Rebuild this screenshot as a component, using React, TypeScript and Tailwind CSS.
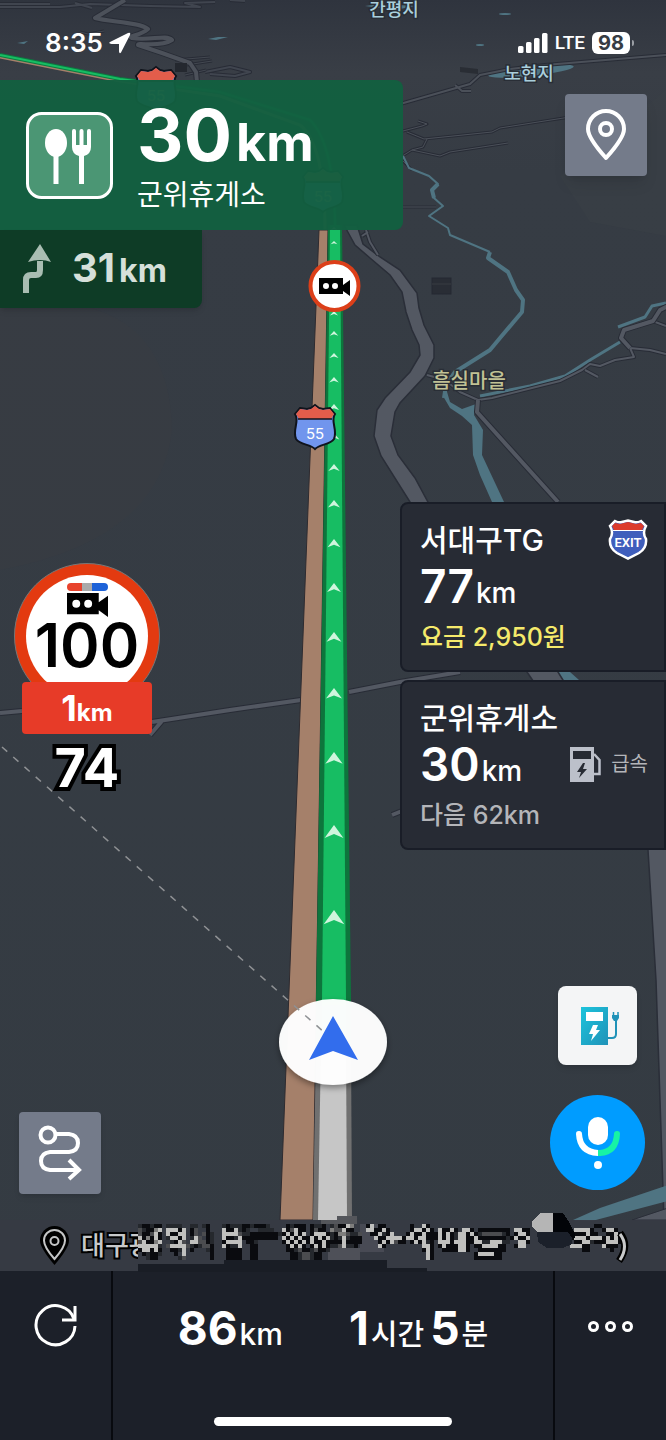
import React from "react";

const chevrons = [231, 245, 315, 335, 357, 381, 408, 437, 468, 504, 543, 587, 636, 692, 756, 829, 914];

const mosaic = [
  "dkkdkk.dddd..dd.dk...dkdddkkdkkkd....kdkkk.kddk.dgkkwm...kw.kk......k..wk.........................................kk.",
  "gdkkmw.wwwkw.kg..k...wkkwdkd..dddd..wkgwkk.kgkk.mggwkk...wwkkwk.....kwwkwk.wkkwk.wwk.kkkkkkkk.wwkk...........wwwwk..kwwk",
  "gkkgwk.wkkww.kg.gkd..wwwwgddkkkkkkkdkwkwkw.kwwwkdkmmgddg..kkwdkw...kwkkwkkkwkwkdwwkwkdgggggdk.kwwk...........kkkwkk..kkwk",
  "wkmkwk.dwwkw.dwg.kd..wkkdwkkkkkkkkk.wkwkwkkwkwkwdkdwdkkk...wkkwwwwkwwkwwkkkwkwkdwwkkwkkkkkkkdkwkkw..........kwwwkwwwkwkwk",
  "gwkkmw..dkwg.wwggkd..kwwww.kkd......kwkwkwkwkkwkkkkwkkkk....kwkwgkk.kwkwdk.wwwkwwwkkwwddwwwdd..wwk...........kkwwdkkkwwwk",
  "wwwwwd.gwwwwgdkdggk..wkddw..kk.......kwkwk.kwkwkddgwddk.....wk.........wwk.kwkkkwwk.kkwwwwkk..kww...........wwwkk...wkkk",
  "kwwkwk..kkdw.k...dk...kkkk..kk.......kkdgkkdgkkd.......................kwk..kkkkwwk..kkkkkkk...................kk.....k.",
  ".kdkkd...k.w......k...kkkk..kk........kkdggdkk..........................wk..........kwwwwkk.............................",
  "..dkk.....dg......k...kkkk..kk........kkdggdkk..........................wk..........kkkkkkk.............................",
];

const tones: Record<string, string> = {
  k: "#0a0b0f",
  d: "#25282d",
  g: "#4b4c4f",
  m: "#7e7e7d",
  w: "#c0c0be",
};

function Road({ d, w = 4, color = "#535862" }: { d: string; w?: number; color?: string }) {
  return (
    <g fill="none" strokeLinejoin="round">
      <path d={d} stroke="#282c36" strokeWidth={w + 2} />
      <path d={d} stroke={color} strokeWidth={w} />
    </g>
  );
}

function HighwayShield({ x, y }: { x: number; y: number }) {
  return (
    <g transform={`translate(${x} ${y})`}>
      <path
        d="M-15-19-8-18-4-19 0-22 4-19 8-18 15-19 20-13C15-6 23 3 19 12 15 18 5 17 0 22-5 17-15 18-19 12-23 3-15-6-20-13Z"
        fill="#7195ed"
        stroke="#10141c"
        strokeWidth="2"
      />
      <path d="M-15-18-8-17-4-18 0-21 4-18 8-17 15-18 19-13 16-8H-16L-19-13Z" fill="#e35d4b" />
      <path d="M-17-8H17" stroke="#10141c" strokeWidth="1.5" />
      <text y="12" textAnchor="middle" fill="#fff" fontSize="15" className="font-['Inter',sans-serif]">
        55
      </text>
    </g>
  );
}

function CameraShape() {
  return <path fillRule="evenodd" d="M0 0H24V7L31 2V18L24 13V16H0ZM7 5A3 3 0 1 0 7 11A3 3 0 1 0 7 5ZM16 5A3 3 0 1 0 16 11A3 3 0 1 0 16 5Z" />;
}

function MapCanvas() {
  return (
    <svg
      className="absolute inset-0 -z-10 h-full w-full"
      viewBox="0 0 666 1440"
      preserveAspectRatio="xMidYMin slice"
      role="img"
      aria-label="지도"
    >
      <defs>
        <linearGradient id="sky" x1="0" y1="0" x2="0" y2="1">
          <stop offset="0" stopColor="#2f343e" />
          <stop offset="0.05" stopColor="#393e46" />
          <stop offset="0.12" stopColor="#363c44" />
          <stop offset="1" stopColor="#343b42" />
        </linearGradient>
        <filter id="soft" x="-30%" y="-30%" width="160%" height="160%">
          <feDropShadow dx="0" dy="3" stdDeviation="3" floodOpacity="0.4" />
        </filter>
      </defs>
      <rect width="666" height="1440" fill="url(#sky)" />
      <path d="M0 308H90Q170 330 172 430Q160 540 0 570Z" fill="#383c43" opacity=".6" />
      <path d="M560 176 590 222 666 236V90Z" fill="#393f46" opacity=".5" />

      <g fill="#4f7482">
        <ellipse cx="531" cy="71" rx="43" ry="5" transform="rotate(-6 531 71)" />
        <ellipse cx="505" cy="14" rx="6" ry="1" />
        <ellipse cx="480" cy="45" rx="4" ry="1" />
        <path d="M208 39 218 37 228 37 216 40ZM17 43 28 41 24 44ZM365 6 380 4 415 6 395 10Z" />
      </g>

      <Road w={2} color="#40454f" d="M0 7H60L90 4 150 6 200 7 185 3 215 2M230 0 245 1M75 3 92 8M0 4 50 4M205 72 230 67 250 72 235 76 210 74" />
      <Road w={1} color="#434851" d="M80 32 88 34 104 31M175 60 210 57M180 66 212 61M185 75 206 70" />
      <Road w={4} color="#4c515a" d="M125 0 95 18C110 22 140 22 148 29 140 36 126 36 132 38 150 41 166 34 172 40 160 48 138 42 138 45L162 53 190 63 196 72 197 82" />
      <Road w={2} color="#4b5059" d="M400 104 470 84 480 75 510 69 545 65 666 55M455 85 462 91 471 91" />
      <Road w={1} color="#4b5059" d="M403 131 422 126 427 124 418 121M407 132 424 139 492 132 500 128 570 117M427 139 423 147 412 150 404 155M412 150 440 156 450 152 508 143M403 207H436M402 160 412 170" />
      <path d="M460 67 478 69V74L460 72Z" fill="#292d34" />
      <rect x="432" y="278" width="19" height="16" fill="#292d35" stroke="#252932" />
      <path d="M432 284H451" stroke="#383c43" />
      <path d="M175 63H187V72H175Z" fill="#24282f" />

      <g fill="none" stroke="#4f7482" strokeLinejoin="round">
        <path strokeWidth="2" d="M403 156 409 168 429 176 438 184 432 190 434 198 443 206 429 216 448 228 450 235 490 252" />
        <path strokeWidth="4" d="M438 184 432 190 434 198M490 252 488 258 508 272 516 290 523 300 522 312 500 338 490 350 455 372 446 385 444 398" />
        <path strokeWidth="3" d="M480 396 530 386 565 376 590 360 620 342M618 327 645 317 652 306 666 303" />
      </g>
      <path
        fill="#4f7482"
        d="M445 385 443 396 450 408 462 416 472 425 473 455 480 475 492 502 536 575 558 672 562 680 579 680 570 672 550 575 504 502 489 470 482 455 483 430 474 415 476 404 462 409 450 402Z"
      />
      <path
        fill="#535862"
        stroke="#2a2e38"
        strokeWidth="1.5"
        d="M344 225 355 245 370 258 390 275 402 292 406 312 412 330 419 345 420 355 410 372 385 398 377 410 374 436 381 456 410 502 527 672 648 850 656 980 664 1220H668V850L558 672 428 502 415 478 398 455 391 436 395 412 400 403 425 376 434 358 434 345 424 325 419 308 417 293 400 270 380 257 363 244 357 225Z"
      />
      <Road w={2} d="M366 230 370 242 378 255M362 236 368 232" />
      <Road w={2} d="M427 375 445 380 460 392 478 400 492 398 560 381 582 370 590 364 600 366 615 360 634 357 630 348 650 350 666 354M585 370 598 377M650 320 666 326" />
      <Road w={4} d="M478 400 477 412 558 502M630 348 621 338 624 330 653 321 660 310 668 306" />
      <Road w={4} d="M0 713 22 711M152 722 230 710 301 700M349 692 400 682 460 672M162 721 150 735M392 815 402 811" />
      <path d="M573 1220 600 1208 668 1185V1201L592 1221Z" fill="#4f7482" />
      <path d="M632 1220 668 1208V1220Z" fill="#535862" stroke="#2a2e38" />

      <g fill="none">
        <path d="M0 57 120 81 220 96 300 125Q325 145 325 230" stroke="#a5806a" strokeWidth="3" />
        <path d="M0 55 120 79 220 92 310 120Q335 145 335 230" stroke="#0b7a40" strokeWidth="4" />
        <path d="M0 55 120 79 220 92 310 120Q335 145 335 230" stroke="#17bd63" strokeWidth="2" />
      </g>
      <path d="M319 230 280 1220H313L328 230Z" fill="#a5806a" stroke="#2e2b30" />
      <path d="M328 225 316 1000V1045H351V1000L342 225Z" fill="#0d753c" />
      <path d="M330 225 322 1000V1045H346V1000L340 225Z" fill="#17bd63" />
      <path d="M316 1045 313 1220H352L351 1045Z" fill="#707070" />
      <path d="M321 1045 318 1220H347L346 1045Z" fill="#c6c6c6" />
      {chevrons.map((y) => {
        const half = 3.2 + (y - 230) * 0.0104;
        const tall = 3 + (y - 230) * 0.0165;
        return <path key={y} fill="#cff5dd" d={`M334 ${y - 4}l${half} ${tall}l${-half} ${-tall * 0.3}l${-half} ${tall * 0.3}Z`} />;
      })}
      <HighwayShield x={156} y={89} />
      <HighwayShield x={323} y={190} />
      <HighwayShield x={315} y={427} />
      <circle cx="334.500" cy="286" r="24" fill="#fff" stroke="#dc3f19" strokeWidth="4" />
      <g transform="translate(319 278)">
        <CameraShape />
      </g>

      <ellipse cx="333" cy="1042" rx="54" ry="43" fill="#fff" fillOpacity=".97" filter="url(#soft)" />
      <path d="M333 1016 358 1060 333 1051 309 1060Z" fill="#326ded" />
      <path d="M2 747 325 1033" stroke="#8f9194" strokeWidth="1.5" strokeDasharray="7 8" fill="none" />

      <g
        className="font-['Noto_Sans_CJK_KR',sans-serif] font-medium"
        stroke="#292e36"
        strokeWidth="3"
        paintOrder="stroke"
        textAnchor="middle"
        fill="#a9cfdc"
      >
        <text x="394" y="16" fontSize="18">간평지</text>
        <text x="529" y="80" fontSize="18">노현지</text>
        <text x="469" y="388" fontSize="20" fill="#c1c295">흠실마을</text>
      </g>
    </svg>
  );
}

function PinIcon({ className }: { className: string }) {
  return (
    <svg viewBox="0 0 40 52" className={className} fill="none" stroke="currentColor" strokeWidth="4" strokeLinejoin="round" aria-hidden="true">
      <path d="M20 49Q2 29 2 20A18 18 0 0 1 38 20Q38 29 20 49Z" />
      <circle cx="20" cy="20" r="6" />
    </svg>
  );
}

function StatusBar() {
  return (
    <header className="flex h-20 items-center justify-between pt-1.5 pr-8 pl-[45px]">
      <div className="flex items-center gap-1.5">
        <time className="text-[26px] leading-8 font-semibold">8:35</time>
        <svg viewBox="0 0 22 22" className="size-[22px]" fill="currentColor" aria-hidden="true">
          <path d="M1 10 19 1Q22 0 21 3L12 20.500Q10.500 22.500 10 19.500V12H2.500Q-1 11.500 1 10Z" />
        </svg>
      </div>
      <div className="flex items-center gap-[7px]">
        <svg viewBox="0 0 30 20" className="h-5 w-[30px]" fill="currentColor" aria-hidden="true">
          <rect y="13" width="5.500" height="7" rx="1.500" />
          <rect x="8" y="9" width="5.500" height="11" rx="1.500" />
          <rect x="16" y="5" width="5.500" height="15" rx="1.500" />
          <rect x="24" width="5.500" height="20" rx="1.500" />
        </svg>
        <span className="font-['Roboto',sans-serif] text-[19px] font-medium">LTE</span>
        <div className="flex items-center gap-0.5">
          <span className="flex h-[22px] w-[38px] items-center justify-center rounded-md bg-white text-xl font-bold text-[#363c44]">98</span>
          <span className="h-1.5 w-0.5 rounded-r bg-[#9a9ea4]" />
        </div>
      </div>
    </header>
  );
}

function Guidance() {
  return (
    <section className="w-[403px] max-w-full" aria-label="경로 안내">
      <div className="flex h-[150px] items-center gap-6 rounded-r-lg bg-[#135f40]/97 pl-[26px]">
        <svg viewBox="0 0 87 87" className="size-[87px]" fill="#fff" aria-hidden="true">
          <rect x="1.500" y="1.500" width="84" height="84" rx="14" fill="#4b9674" stroke="#fff" strokeWidth="3" />
          <ellipse cx="30" cy="31" rx="11" ry="14" />
          <path d="M27.500 42H32.500V72H27.500ZM46 19Q46 17 48 17T50 19V33H53.500V19Q53.500 17 55.500 17T57.500 19V33H61V19Q61 17 63 17T65 19V35Q65 42 58 44V72H53V44Q46 42 46 35Z" />
        </svg>
        <div className="flex flex-col">
          <p className="flex items-baseline gap-1 font-bold">
            <span className="text-7xl leading-[72px]">30</span>
            <span className="text-[52px] leading-[72px]">km</span>
          </p>
          <p className="text-[28px] leading-8">군위휴게소</p>
        </div>
      </div>
      <div className="flex h-[78px] w-[202px] items-center gap-[18px] rounded-br-lg bg-[#0e3c26] pl-5 text-[#d6e0da] shadow-md">
        <svg viewBox="0 0 30 50" className="h-[50px] w-[34px]" aria-hidden="true">
          <path d="M4 49V36Q4 31 9 31H14Q18 31 18 26V17" fill="none" stroke="#a9bdb2" strokeWidth="6" />
          <path d="M18 0 29 18Q24 16 18 16T6 18Z" fill="#a9bdb2" />
        </svg>
        <p className="flex items-baseline gap-1 font-bold">
          <span className="text-[40px] leading-12">31</span>
          <span className="text-[32px] leading-12">km</span>
        </p>
      </div>
    </section>
  );
}

function SpeedCamera() {
  return (
    <section className="flex w-[146px] flex-col items-center" aria-label="단속 카메라">
      <div className="flex h-[119px] w-[146px] flex-col items-center overflow-hidden">
        <div className="flex size-[146px] shrink-0 flex-col items-center rounded-full border border-[#777] bg-[#e33a10] p-[11px]">
          <div className="flex size-[122px] flex-col items-center rounded-full bg-white pt-2 text-black">
            <div className="flex h-2 w-[41px] shrink-0 overflow-hidden rounded-full">
              <span className="flex-1 bg-[#e8432d]" />
              <span className="w-2.5 bg-[#aaaaaa]" />
              <span className="flex-1 bg-[#1d62d8]" />
            </div>
            <svg viewBox="0 0 31 18" className="mt-0.5 h-6 w-[41px] shrink-0" aria-hidden="true">
              <CameraShape />
            </svg>
            <p className="text-[60px] leading-14 font-semibold">100</p>
          </div>
        </div>
      </div>
      <p className="flex h-[52px] w-[130px] items-baseline justify-center rounded bg-[#e73b28] font-bold">
        <span className="text-4xl leading-[52px]">1</span>
        <span className="text-2xl leading-[52px]">km</span>
      </p>
      <p className="text-[54px] leading-[68px] font-bold [-webkit-text-stroke:8px_#000] [paint-order:stroke] [stroke-linejoin:round]">74</p>
    </section>
  );
}

function ExitShield() {
  return (
    <svg viewBox="0 0 40 42" className="h-[42px] w-10" aria-hidden="true">
      <path d="M7 2Q11 4 14 3L20 1.500 26 3Q29 4 33 2L38 7Q34 14 38 20 39 29 31 34L20 39.500 9 34Q1 29 2 20 6 14 2 7Z" fill="#3f5ebc" stroke="#fff" strokeWidth="2.500" />
      <path d="M7 4 12 5 20 3 28 5 33 4 36 7 34 11H6L4 7Z" fill="#dc3b2c" />
      <path d="M5 11.500H35" stroke="#fff" />
      <text x="20" y="28" textAnchor="middle" fill="#fff" fontSize="13" fontWeight="600" className="font-['Roboto',sans-serif]">
        EXIT
      </text>
    </svg>
  );
}

function UpcomingStops() {
  const card = "flex h-[170px] flex-col rounded-l-lg border-2 border-[#191d27] bg-[#272b34] pt-3 pr-4 pl-[18px]";
  return (
    <section className="flex w-[266px] flex-col gap-2" aria-label="다음 지점">
      <article className={card}>
        <div className="flex items-center justify-between">
          <h2 className="text-3xl leading-12 font-medium">서대구TG</h2>
          <ExitShield />
        </div>
        <p className="flex items-baseline gap-0.5">
          <span className="text-[46px] leading-11 font-semibold">77</span>
          <span className="text-[28px] leading-11 font-medium">km</span>
        </p>
        <p className="text-[25px] leading-11 font-medium text-[#f5ea6b]">요금 2,950원</p>
      </article>
      <article className={card}>
        <h2 className="text-3xl leading-12 font-medium">군위휴게소</h2>
        <div className="flex items-start justify-between">
          <p className="flex items-baseline gap-0.5">
            <span className="text-[46px] leading-11 font-semibold">30</span>
            <span className="text-[28px] leading-11 font-medium">km</span>
          </p>
          <div className="flex items-center gap-2.5 text-[#b4b5b9]">
            <svg viewBox="0 0 31 35" className="h-[35px] w-[31px]" aria-hidden="true">
              <path fillRule="evenodd" fill="#bcc0ca" d="M0 0H24V35H0ZM3 4V12H21V4ZM13 16 7 25H11L9 31 17 22H13L15 16Z" />
              <path d="M24 7 29.500 13V27H24" fill="none" stroke="#bcc0ca" strokeWidth="2.500" />
            </svg>
            <span className="text-xl leading-11">급속</span>
          </div>
        </div>
        <p className="text-[25px] leading-11 font-medium text-[#b4b5b9]">다음 62km</p>
      </article>
    </section>
  );
}

function MapActions() {
  return (
    <section className="mt-[136px] flex items-end justify-between pr-[21px] pl-[19px]" aria-label="지도 버튼">
      <button aria-label="경로 보기" className="flex size-[82px] items-center justify-center rounded bg-[#747b8a] shadow-md">
        <svg viewBox="0 0 44 56" className="h-14 w-11" fill="none" stroke="#fff" strokeWidth="4" aria-hidden="true">
          <circle cx="10" cy="10" r="7.500" />
          <path d="M18 9H31Q40 10 40 18T31 27H12Q3 28 3 36T12 45H40M31 35 41 45 31 54" />
        </svg>
      </button>
      <div className="flex flex-col items-center gap-[30px] pb-1">
        <button aria-label="전기차 충전소" className="flex size-[79px] items-center justify-center rounded-lg bg-[#f4f5f6] pl-1 shadow-md">
          <svg viewBox="0 0 38 38" className="size-[38px]" aria-hidden="true">
            <defs>
              <linearGradient id="pump" x1="0" y1="0" x2="1" y2="1">
                <stop stopColor="#1cc4dc" />
                <stop offset="1" stopColor="#2092b8" />
              </linearGradient>
            </defs>
            <path fill="url(#pump)" d="M0 0H27V38H0Z" />
            <path fill="#fff" d="M5 5H22V14H5ZM12 18H17L15 23H19L10 34 12 27H8Z" />
            <path d="M27 31H31Q35 31 35 27V12" fill="none" stroke="#2092b8" strokeWidth="2" />
            <path d="M32.500 5V9M37 5V9" stroke="#2092b8" strokeWidth="1.500" />
            <path d="M31 8H38V11L36 14H33L31 11Z" fill="#2092b8" />
          </svg>
        </button>
        <button aria-label="음성 인식" className="flex size-[95px] items-center justify-center rounded-full bg-[#009cff]">
          <svg viewBox="0 0 46 54" className="h-[54px] w-[46px]" fill="none" strokeWidth="6" strokeLinecap="round" aria-hidden="true">
            <path d="M42 18Q41 36 25 37" stroke="#17f3a5" />
            <path d="M4 18Q5 36 23 37" stroke="#fff" />
            <path d="M23 34H26V40H23Z" fill="#17f3a5" />
            <rect x="13" y="1" width="20" height="28" rx="10" fill="#fff" />
            <circle cx="23" cy="49" r="4" fill="#fff" />
          </svg>
        </button>
      </div>
    </section>
  );
}

function AddressBar() {
  return (
    <section className="relative mt-[26px] flex h-[51px] items-center gap-3 bg-[#373a43]/95 pl-10 text-[#c8c9ca]" aria-label="현재 위치">
      <svg viewBox="0 0 29 40" className="h-10 w-[29px]" aria-hidden="true">
        <path d="M14.500 39Q0 22 0 14.500A14.500 14.500 0 0 1 29 14.500Q29 22 14.500 39Z" fill="#000" />
        <path d="M14.500 33Q4 21 4 14.500A10.500 10.500 0 0 1 25 14.500Q25 21 14.500 33Z" fill="none" stroke="#c4c5c6" strokeWidth="2" />
        <circle cx="14.500" cy="15" r="4" fill="none" stroke="#c4c5c6" strokeWidth="2" />
      </svg>
      <p className="text-[26px] leading-8 font-medium [-webkit-text-stroke:4px_#000] [paint-order:stroke] [stroke-linejoin:round]">대구광</p>
      <svg viewBox="130 1212 500 60" className="absolute bottom-[-1px] left-[130px] h-[60px] w-[500px]" shapeRendering="crispEdges" aria-hidden="true">
        <path d="M138 1224H164V1264H138Z" fill="#363a43" />
        <path d="M138 1264H224V1260H387V1268H427V1272H138Z" fill="#191d25" />
        <path d="M337 1216H357V1224H321V1220H337Z" fill="#54565b" />
        <path d="M360 1224H384V1252H360Z" fill="#484a54" />
        <path d="M328 1248H360V1260H328Z" fill="#4e5058" />
        {mosaic.flatMap((row, r) =>
          row.split("").map((tone, c) =>
            tones[tone] ? <rect key={`${r}-${c}`} x={138 + c * 4} y={1224 + r * 4} width="4" height="4" fill={tones[tone]} /> : null,
          ),
        )}
        <path d="M540 1213H553V1232H537L532 1227V1222L536 1217Z" fill="#b5b5b5" />
        <path d="M553 1213H563L569 1222L575 1234V1238H570L566 1232H553Z" fill="#020408" />
        <path d="M537 1232H568L572 1238V1244L563 1248H547L538 1242Z" fill="#1b202a" />
        <path d="M620 1233Q630 1246 619 1261" fill="none" stroke="#000" strokeWidth="7" shapeRendering="auto" />
        <path d="M620 1234Q629 1246 620 1260" fill="none" stroke="#c8c9ca" strokeWidth="3" shapeRendering="auto" />
      </svg>
    </section>
  );
}

function TripBar() {
  return (
    <footer className="flex flex-1 flex-col bg-[#1c2029]">
      <div className="grid min-h-[169px] flex-1 grid-cols-[113px_1fr_113px]">
        <button aria-label="재탐색" className="flex items-start justify-center border-r-2 border-[#080a0f] pt-[33px]">
          <svg viewBox="0 0 44 44" className="size-11" fill="none" stroke="#fff" strokeWidth="3" aria-hidden="true">
            <path d="M41 22A19.500 19.500 0 1 1 40 15" />
            <path d="M41 2V16H28" />
          </svg>
        </button>
        <div className="flex flex-col items-center justify-between pb-3.5">
          <div className="flex items-baseline gap-[66px] pt-[29px] font-medium">
            <p className="flex items-baseline gap-0.5 leading-14">
              <span className="text-[46px] font-bold">86</span>
              <span className="text-3xl leading-14">km</span>
            </p>
            <p className="flex items-baseline gap-0.5 leading-14">
              <span className="text-[46px] font-bold">1</span>
              <span className="mr-1 text-[29px]">시간</span>
              <span className="text-[46px] font-bold">5</span>
              <span className="text-[29px]">분</span>
            </p>
          </div>
          <div className="h-[9px] w-[238px] rounded-full bg-white" />
        </div>
        <button aria-label="더보기" className="flex items-start justify-center gap-1.5 border-l-2 border-[#080a0f] pt-[50px]">
          <span className="size-[11px] rounded-full border-3 border-white" />
          <span className="size-[11px] rounded-full border-3 border-white" />
          <span className="size-[11px] rounded-full border-3 border-white" />
        </button>
      </div>
    </footer>
  );
}

export default function App() {
  return (
    <main className="relative isolate flex min-h-screen flex-col overflow-hidden bg-[#343b42] font-['Inter','Noto_Sans_CJK_KR',sans-serif] text-white">
      <MapCanvas />
      <StatusBar />
      <div className="flex items-start justify-between">
        <Guidance />
        <button aria-label="위치" className="mt-3.5 mr-[19px] flex size-[82px] shrink-0 items-center justify-center rounded bg-[#747b8a] shadow-lg">
          <PinIcon className="h-[52px] w-10" />
        </button>
      </div>
      <div className="flex items-start justify-between">
        <div className="pt-[255px] pl-3.5">
          <SpeedCamera />
        </div>
        <div className="pt-[194px]">
          <UpcomingStops />
        </div>
      </div>
      <MapActions />
      <AddressBar />
      <TripBar />
    </main>
  );
}
